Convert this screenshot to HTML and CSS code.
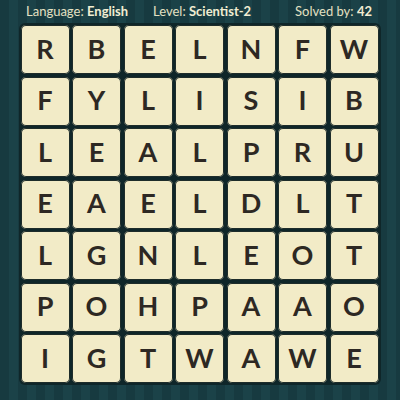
FILE: index.html
```html
<!DOCTYPE html>
<html>
<head>
<meta charset="utf-8">
<link rel="stylesheet" href="styles.css">
</head>
<body>
<div class="page">
  <div class="header">
    <span class="item lang">Language: <b>English</b></span>
    <span class="item level">Level: <b>Scientist-2</b></span>
    <span class="item solved">Solved by: <b>42</b></span>
  </div>
  <div class="board">
    <div class="tile">R</div><div class="tile">B</div><div class="tile">E</div><div class="tile">L</div><div class="tile">N</div><div class="tile">F</div><div class="tile">W</div>
    <div class="tile">F</div><div class="tile">Y</div><div class="tile">L</div><div class="tile">I</div><div class="tile">S</div><div class="tile">I</div><div class="tile">B</div>
    <div class="tile">L</div><div class="tile">E</div><div class="tile">A</div><div class="tile">L</div><div class="tile">P</div><div class="tile">R</div><div class="tile">U</div>
    <div class="tile">E</div><div class="tile">A</div><div class="tile">E</div><div class="tile">L</div><div class="tile">D</div><div class="tile">L</div><div class="tile">T</div>
    <div class="tile">L</div><div class="tile">G</div><div class="tile">N</div><div class="tile">L</div><div class="tile">E</div><div class="tile">O</div><div class="tile">T</div>
    <div class="tile">P</div><div class="tile">O</div><div class="tile">H</div><div class="tile">P</div><div class="tile">A</div><div class="tile">A</div><div class="tile">O</div>
    <div class="tile">I</div><div class="tile">G</div><div class="tile">T</div><div class="tile">W</div><div class="tile">A</div><div class="tile">W</div><div class="tile">E</div>
  </div>
</div>
</body>
</html>
```
FILE: styles.css
```css
html, body {
  margin: 0;
  padding: 0;
}
body {
  width: 400px;
  height: 400px;
  overflow: hidden;
  background-color: #183c42;
  background-image: repeating-linear-gradient(90deg, #173a40 0px, #173a40 9px, #1b4248 9px, #1b4248 18px);
  font-family: "Lato", "Open Sans", sans-serif;
}
.page {
  display: flex;
  flex-direction: column;
  align-items: center;
}
.header {
  width: 400px;
  height: 23px;
  position: relative;
  color: #e4e0c2;
  font-size: 13px;
  line-height: 23px;
}
.header b {
  font-weight: 700;
  color: #f1edd2;
}
.item {
  position: absolute;
  top: 0;
}
.lang { left: 26px; }
.level { left: 153px; }
.solved { right: 28px; }
.board {
  display: grid;
  grid-template-columns: repeat(7, 49px);
  grid-auto-rows: 49px;
  gap: 2.5px;
  padding: 2px;
  background: #0f2629;
  border-radius: 6px;
  margin-left: -1px;
}
.tile {
  background: #f2ebc7;
  border-radius: 5px;
  box-shadow: inset 0 0 0 1px #1e2c2a;
  display: flex;
  align-items: center;
  justify-content: center;
  color: #2d2823;
  font-size: 27px;
  font-weight: 700;
  padding-bottom: 3px;
  box-sizing: border-box;
}
```
